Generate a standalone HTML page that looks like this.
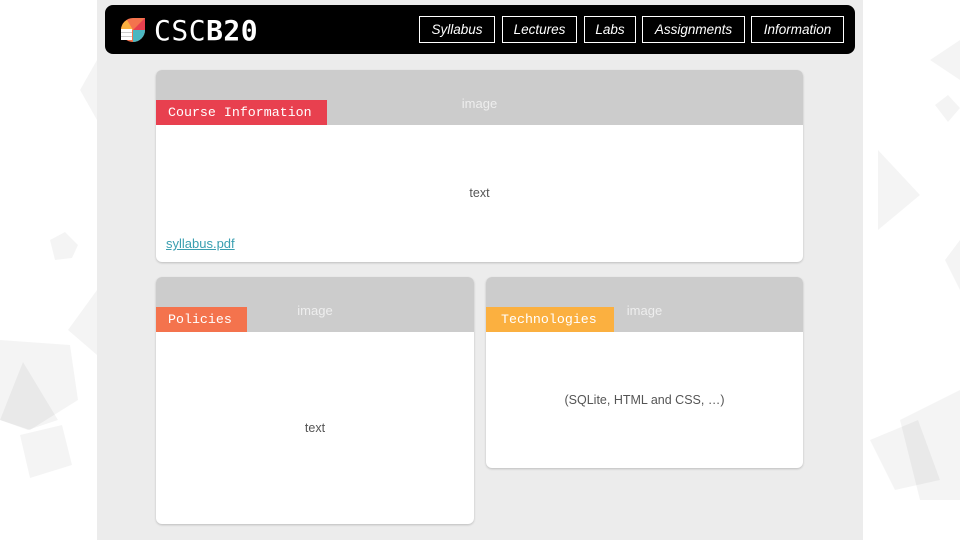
<!DOCTYPE html>
<html><head><style>
*{margin:0;padding:0;box-sizing:border-box}
body{width:960px;height:540px;overflow:hidden;background:#fff;position:relative;font-family:"Liberation Sans",sans-serif}
#bg{position:absolute;left:0;top:0}
#col{position:absolute;left:97px;top:0;width:766px;height:540px;background:#ececec}
#hdr{position:absolute;left:105px;top:5px;width:750px;height:49px;background:#000;border-radius:8px}
.logo{position:absolute;left:49px;top:9px;color:#fff;font-family:"DejaVu Sans Mono","Liberation Mono",monospace;font-size:28px;letter-spacing:0.5px;font-weight:normal}
.logo b{font-weight:bold}
.nav{position:absolute;top:11px;height:27px;border:1px solid #fff;color:#fff;font-style:italic;font-size:13.5px;line-height:25px;text-align:center}
.card{position:absolute;background:#fff;border-radius:6px;overflow:hidden;box-shadow:0 1px 2px rgba(0,0,0,.2)}
.img{position:absolute;left:0;top:0;width:100%;height:55px;background:#cccccc;color:#eee;font-size:13px;text-align:center}
.lab{position:absolute;left:0;top:30px;height:25px;color:#fff;font-family:"Liberation Mono",monospace;font-size:13.3px;line-height:26px;padding-left:12px;letter-spacing:0}
.txt{position:absolute;width:100%;text-align:center;color:#555;font-size:12.5px}
</style></head><body>
<svg id="bg" width="960" height="540">
<g fill="#000" fill-opacity=".045">
<polygon points="0,340 70,345 78,400 30,430 0,420"/>
<polygon points="0,420 23,362 58,420 28,430"/>
<polygon points="20,435 62,425 72,465 30,478"/>
<polygon points="50,240 65,232 78,245 72,258 55,260"/>
<polygon points="68,330 97,290 97,355"/>
<polygon points="80,90 97,60 97,120"/>
<polygon points="878,150 920,195 878,230"/>
<polygon points="930,60 960,40 960,80"/>
<polygon points="935,105 948,95 960,108 948,122"/>
<polygon points="870,440 918,420 940,480 895,490"/>
<polygon points="900,420 960,390 960,500 920,500"/>
<polygon points="945,260 960,240 960,290"/>
</g></svg>
<div id="col"></div>
<div id="hdr">
<svg style="position:absolute;left:14px;top:11px" width="28" height="28" viewBox="0 0 28 28">
<path d="M14 2 L26 2 L26 14 A12 12 0 0 1 14 26 A12 12 0 0 1 2 14 A12 12 0 0 1 14 2Z" fill="#f4734d"/>
<path d="M14 14 L26 2 L26 14Z" fill="#e8404f"/>
<path d="M14 14 L26 14 A12 12 0 0 1 14 26Z" fill="#4bb7c1"/>
<path d="M2 14 A12 12 0 0 1 8 4 L14 14Z" fill="#fbb040"/>
<rect x="2" y="13" width="11" height="11" fill="#fff"/>
<rect x="2" y="16" width="11" height="1" fill="#ccc"/><rect x="2" y="20" width="11" height="1" fill="#ccc"/>
</svg>
<div class="logo">CSC<b>B20</b></div>
<div class="nav" style="left:314px;width:76px">Syllabus</div>
<div class="nav" style="left:397px;width:75px">Lectures</div>
<div class="nav" style="left:479px;width:52px">Labs</div>
<div class="nav" style="left:537px;width:103px">Assignments</div>
<div class="nav" style="left:646px;width:93px">Information</div>
</div>
<div class="card" style="left:156px;top:70px;width:647px;height:192px">
<div class="img"><span style="position:relative;top:26px">image</span></div>
<div class="lab" style="background:#e8404f;width:171px">Course Information</div>
<div class="txt" style="top:116px">text</div>
<div style="position:absolute;left:10px;top:166px;color:#3a9fb0;font-size:13px;text-decoration:underline">syllabus.pdf</div>
</div>
<div class="card" style="left:156px;top:277px;width:318px;height:247px">
<div class="img"><span style="position:relative;top:26px">image</span></div>
<div class="lab" style="background:#f4734d;width:91px">Policies</div>
<div class="txt" style="top:144px">text</div>
</div>
<div class="card" style="left:486px;top:277px;width:317px;height:191px">
<div class="img"><span style="position:relative;top:26px">image</span></div>
<div class="lab" style="background:#fbb040;width:128px;padding-left:15px">Technologies</div>
<div class="txt" style="top:116px">(SQLite, HTML and CSS, …)</div>
</div>
</body></html>
